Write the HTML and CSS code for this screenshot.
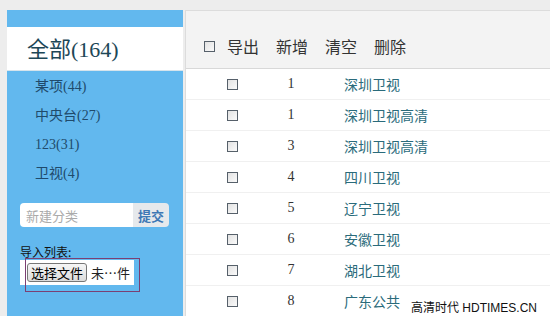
FILE: index.html
```html
<!DOCTYPE html>
<html lang="zh-CN">
<head>
    <meta charset="UTF-8">
    <title>频道列表</title>
    <link rel="stylesheet" href="styles.css">
</head>
<body>
    <div class="page">
        <aside class="sidebar">
            <div class="all">全部(164)</div>
            <ul class="cats">
                <li>某项(44)</li>
                <li>中央台(27)</li>
                <li>123(31)</li>
                <li>卫视(4)</li>
            </ul>
            <div class="new-cat">
                <input type="text" placeholder="新建分类">
                <button>提交</button>
            </div>
            <div class="import-label">导入列表:</div>
            <div class="import">
                <div class="file-box">
                    <span class="file-btn">选择文件</span>
                    <span class="file-name">未…件</span>
                </div>
            </div>
        </aside>
        <main class="main">
            <div class="toolbar">
                <span class="check"></span>
                <span class="tool">导出</span>
                <span class="tool">新增</span>
                <span class="tool">清空</span>
                <span class="tool">删除</span>
            </div>
            <div class="row"><span class="check"></span><span class="num">1</span><span class="name">深圳卫视</span></div>
            <div class="row"><span class="check"></span><span class="num">1</span><span class="name">深圳卫视高清</span></div>
            <div class="row"><span class="check"></span><span class="num">3</span><span class="name">深圳卫视高清</span></div>
            <div class="row"><span class="check"></span><span class="num">4</span><span class="name">四川卫视</span></div>
            <div class="row"><span class="check"></span><span class="num">5</span><span class="name">辽宁卫视</span></div>
            <div class="row"><span class="check"></span><span class="num">6</span><span class="name">安徽卫视</span></div>
            <div class="row"><span class="check"></span><span class="num">7</span><span class="name">湖北卫视</span></div>
            <div class="row"><span class="check"></span><span class="num">8</span><span class="name">广东公共</span></div>
        </main>
    </div>
    <div class="watermark">高清时代 HDTIMES.CN</div>
</body>
</html>
```

FILE: styles.css
```css
body {
    margin: 0;
    background: #ededed;
    font-family: "Liberation Serif", "Noto Sans CJK SC", serif;
    overflow: hidden;
}

.page {
    display: flex;
    padding: 10px 0 0 7px;
    height: 306px;
}

.sidebar {
    width: 176px;
    flex: none;
    background: #62b8ee;
    padding-top: 17px;
}

.all {
    height: 43px;
    line-height: 45px;
    background: #fff;
    border-bottom: 1px solid #d6e4ec;
    padding-left: 20px;
    font-size: 22px;
    color: #1d4757;
}

.cats {
    list-style: none;
    margin: 0;
    padding: 1px 0 0 28px;
}

.cats li {
    line-height: 29px;
    font-size: 14px;
    color: #204a6b;
}

.new-cat {
    display: flex;
    margin: 15px 0 0 13px;
    height: 24px;
}

.new-cat input {
    width: 113px;
    box-sizing: border-box;
    border: none;
    border-radius: 4px 0 0 4px;
    padding: 0 6px;
    font: 13px "Noto Sans CJK SC", sans-serif;
    background: #fff;
}

.new-cat input::placeholder {
    color: #aaa;
}

.new-cat button {
    width: 36px;
    border: none;
    border-radius: 0 4px 4px 0;
    background: #e6e9ec;
    color: #3d78b5;
    font: bold 13px "Noto Sans CJK SC", sans-serif;
    padding: 0;
}

.import-label {
    margin: 18px 0 0 13px;
    font: 12px/14px "Noto Sans CJK SC", sans-serif;
    color: #111;
}

.import {
    position: relative;
    margin-left: 13px;
    padding-top: 1px;
}

/* annotation frame over the file picker */
.import::after {
    content: "";
    position: absolute;
    left: 5px;
    top: -1px;
    width: 113px;
    height: 32px;
    border: 1px solid #7b3f73;
}

.file-box {
    width: 114px;
    height: 25px;
    background: #fff;
    display: flex;
    align-items: center;
    font: 13px "Noto Sans CJK SC", sans-serif;
}

.file-btn {
    margin-left: 7px;
    height: 17px;
    line-height: 17px;
    padding: 0 3px;
    border: 1px solid #777;
    border-radius: 3px;
    background: linear-gradient(#f6f6f6, #dcdcdc);
    color: #000;
}

.file-name {
    margin-left: 4px;
    color: #222;
}

.main {
    flex: 1;
    margin-left: 2px;
    background: #fff;
    border-left: 1px solid #dcdcdc;
    border-top: 1px solid #dcdcdc;
}

.toolbar {
    background: #f3f3f3;
    border-bottom: 1px solid #d8d8d8;
    display: flex;
    align-items: center;
    padding-left: 18px;
    padding-top: 13px;
    box-sizing: border-box;
    height: 58px;
    font: 16px "Noto Sans CJK SC", sans-serif;
    color: #333;
}

.toolbar .check {
    margin-right: 12px;
}

.tool {
    margin-right: 17px;
}

.check {
    display: inline-block;
    width: 9px;
    height: 9px;
    border: 1px solid #56606a;
    background: linear-gradient(135deg, #e2e2e2, #fafafa);
}

.row {
    display: grid;
    grid-template-columns: 92px 26px 1fr;
    align-items: center;
    height: 30px;
    border-bottom: 1px solid #f0f0f0;
}

.row .check {
    justify-self: center;
}

.num {
    text-align: center;
    font-size: 14px;
    color: #333;
}

.name {
    padding-left: 40px;
    font: 14px "Noto Sans CJK SC", sans-serif;
    color: #2a6b7b;
}

.watermark {
    position: absolute;
    right: 13px;
    bottom: 0;
    font: 12px/16px "Liberation Sans", "Noto Sans CJK SC", sans-serif;
    color: #111;
}
```
